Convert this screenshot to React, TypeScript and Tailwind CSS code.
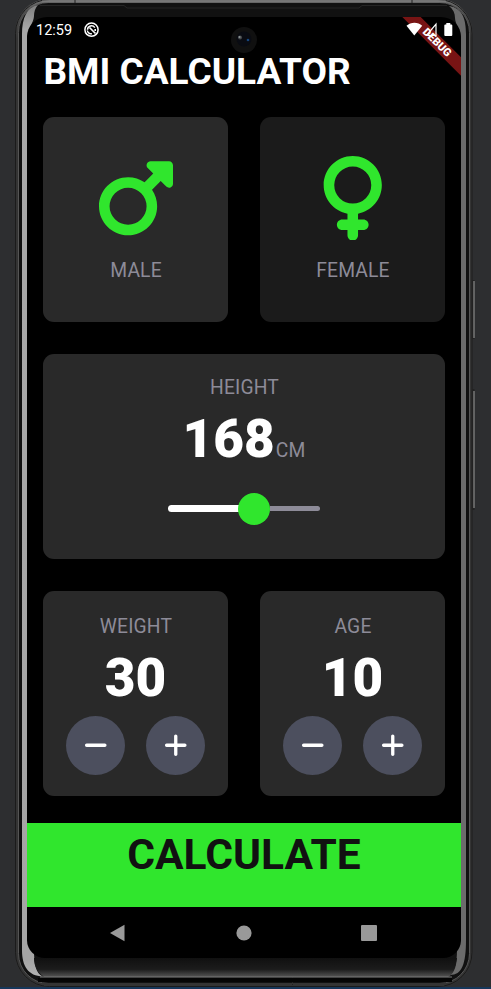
import type { ReactNode } from "react";
import { FaMars, FaMinus, FaPlus, FaVenus } from "react-icons/fa6";

function PhoneShell() {
  return (
    <svg className="absolute inset-0" width="491" height="989" viewBox="0 0 491 989" fill="none">
      <defs>
        <linearGradient id="rim" x1="0" y1="0" x2="0" y2="1">
          <stop offset="0" stopColor="#777" />
          <stop offset="0.012" stopColor="#505050" />
          <stop offset="0.04" stopColor="#343434" />
          <stop offset="1" stopColor="#343434" />
        </linearGradient>
        <linearGradient id="chin" x1="0" y1="958" x2="0" y2="977" gradientUnits="userSpaceOnUse">
          <stop offset="0" stopColor="#101010" />
          <stop offset="0.6" stopColor="#1c1c1c" />
          <stop offset="1" stopColor="#555" />
        </linearGradient>
        <linearGradient id="glassL" x1="0" y1="0" x2="0" y2="989" gradientUnits="userSpaceOnUse">
          <stop offset="0" stopColor="#777" />
          <stop offset="0.03" stopColor="#a9a9a9" />
          <stop offset="0.97" stopColor="#a5a5a5" />
          <stop offset="1" stopColor="#bbb" />
        </linearGradient>
      </defs>
      <path d="M472 280h2.500v59H472zM472 389h2.500v121H472z" fill="#222" />
      <path d="M474 281v57M474 391v117" stroke="#a0a0a0" />
      <rect x="15" y="-1" width="457.500" height="988" rx="34" fill="url(#rim)" />
      <rect x="15.500" y="-0.500" width="456.500" height="987" rx="34" stroke="#1b1b1b" />
      <rect x="18.500" y="2.500" width="451" height="981" rx="30" fill="#111" stroke="#555" />
      <path d="M42 1.500h404" stroke="#777" strokeWidth="2" />
      <path d="M75 0v3M412 0v3M292.500 977v9" stroke="#222" />
      <rect x="21.500" y="4.500" width="445" height="973" rx="26" fill="#111" />
      <path d="M38 5C27 7 22 18 22 34V950C22 966 28 976 43 976.500C36 974 34 964 34 950L27 940V40C27 30 34 22 34 16C34 12 35 8 38 5Z" fill="url(#glassL)" />
      <path d="M449 6C462 8 466 18 466 34V940C466 964 462 975 450 975C455 970 457 962 457 950L461 940V40C461 30 455 24 455 18C455 13 453 9 449 6Z" fill="#6b6b6b" />
      <path d="M34 958H457C456 968 453 975 448 977H44C37 972 34 966 34 958Z" fill="url(#chin)" />
      <path d="M40 977h412" stroke="#777" strokeWidth="1" />
      <path d="M38 980h414" stroke="#050505" strokeWidth="4" />
      <path d="M40 983.500h408M44 985.500h400" stroke="#343434" />
      <path d="M40 5.500h84l3 2.500h232l3-2.500h85" stroke="#252525" />
      <path d="M0 988h491" stroke="#17375a" strokeWidth="2" />
    </svg>
  );
}

function StatusBar() {
  return (
    <header className="relative z-10 flex h-[35px] shrink-0 items-start pl-[9px] pr-[7px] pt-[5px] text-white">
      <span className="text-[14.500px] leading-[17px]">12:59</span>
      <svg className="ml-[12px]" width="15" height="16" viewBox="0 0 15 16" fill="none">
        <circle cx="7.500" cy="7.700" r="6.600" stroke="white" strokeWidth="1.500" />
        <path d="M3.500 7.700a4 4 0 0 1 7.300-2.100M3.300 8.500a4 4 0 0 0 4.600 3.300" stroke="white" strokeWidth="1.500" />
        <path d="M5.500 5.500l6 6M11.200 7v2" stroke="white" strokeWidth="1.600" />
      </svg>
      <svg className="ml-auto" width="48" height="16" viewBox="0 0 48 16">
        <path d="M0.500 3.800C5-.2 12-.2 16.200 3.800L8.300 13.600Z" fill="white" />
        <path d="M30 2.200v11.300H20.500Z" fill="none" stroke="white" strokeWidth="1.200" />
        <path d="M40.300 1h4v1.400h1q1 0 1 1V13q0 1-1 1h-6q-1 0-1-1V3.400q0-1 1-1h1Z" fill="white" />
      </svg>
    </header>
  );
}

function DebugBanner() {
  return (
    <div className="absolute right-0 top-0 h-[60px] w-[60px] overflow-hidden">
      <div className="absolute left-[-14.500px] top-[18.500px] flex h-[13px] w-[100px] rotate-45 items-center justify-center bg-[#781414] text-[11px] font-black leading-none text-white">
        DEBUG
      </div>
    </div>
  );
}

function Label({ children }: { children: ReactNode }) {
  return <span className="pl-px text-[19.300px] leading-6 tracking-[0.150px] text-[#8d8b98]">{children}</span>;
}

function Gender({ label, icon, shade }: { label: string; icon: ReactNode; shade: string }) {
  return (
    <button className={`flex w-[185px] flex-col items-center gap-[19px] rounded-[11px] pt-[38.700px] text-[#30e62d] ${shade}`}>
      {icon}
      <Label>{label}</Label>
    </button>
  );
}

function Counter({ label, value }: { label: string; value: number }) {
  const round = "flex h-[59px] w-[59px] items-center justify-center rounded-full bg-[#4c4f5e] text-white";
  return (
    <section className="flex w-[185px] flex-col items-center rounded-[11px] bg-[#292929] pt-[24px]">
      <Label>{label}</Label>
      <span className="mt-[11px] text-[53px] font-black leading-[56px] text-white">{value}</span>
      <div className="mt-[10px] flex gap-[21px]">
        <button className={round}><FaMinus className="h-[26.500px] w-[23.500px]" /></button>
        <button className={round}><FaPlus className="h-[26.500px] w-[23.500px]" /></button>
      </div>
    </section>
  );
}

export default function App() {
  return (
    <div className="relative h-[989px] w-[491px] overflow-hidden bg-[#2d2e30] pl-[27px] pt-[17px] font-[Roboto,sans-serif]">
      <PhoneShell />
      <div className="relative flex h-[941px] w-[434px] flex-col overflow-hidden rounded-b-[18px] rounded-t-[20px] bg-black">
        <StatusBar />
        <svg className="absolute left-[203px] top-[9px]" width="28" height="28" viewBox="0 0 28 28">
          <circle cx="14" cy="14" r="13" fill="#101010" />
          <circle cx="14" cy="13" r="7.500" fill="#090b12" />
          <circle cx="10" cy="11.500" r="2" fill="#46494c" />
          <circle cx="9.500" cy="11" r="1" fill="#8c9696" />
          <circle cx="18" cy="14" r="1.300" fill="#17457c" />
        </svg>
        <h1 className="pl-[16.500px] text-[37px] font-bold leading-10 text-white">BMI CALCULATOR</h1>
        <main className="mt-[25px] flex flex-col gap-8 px-4">
          <div className="flex h-[205px] justify-between">
            <Gender label="MALE" shade="bg-[#292929]" icon={<FaMars className="h-[84.600px] w-[74px]" />} />
            <Gender label="FEMALE" shade="bg-[#1b1b1b]" icon={<FaVenus className="h-[84.600px] w-[63.500px]" />} />
          </div>
          <section className="flex h-[205px] flex-col items-center rounded-[11px] bg-[#292929] pt-[22px]">
            <Label>HEIGHT</Label>
            <div className="mt-[11px] flex items-baseline leading-[56px]">
              <span className="text-[53px] font-black leading-[56px] text-white">168</span>
              <Label>CM</Label>
            </div>
            <div className="mt-[25.500px] flex h-8 w-[152px] items-center">
              <div className="h-[6.500px] w-[72px] rounded-l-full bg-white" />
              <div className="-ml-0.5 h-8 w-8 shrink-0 rounded-full bg-[#30e62d]" />
              <div className="h-[5px] flex-1 rounded-r-full bg-[#8d8b98]" />
            </div>
          </section>
          <div className="flex h-[205px] justify-between">
            <Counter label="WEIGHT" value={30} />
            <Counter label="AGE" value={10} />
          </div>
        </main>
        <button className="mt-[27px] flex h-[84px] shrink-0 items-start justify-center bg-[#30e62d] pt-[8px] text-[42.500px] font-bold leading-[48px] text-[#111]">
          CALCULATE
        </button>
        <nav className="flex h-[51px] items-center justify-between pl-[82px] pr-[84px] text-[#999]">
          <svg width="16" height="18" viewBox="0 0 16 18" fill="currentColor"><path d="M1 9L15.500 0.700V17.300Z" /></svg>
          <svg className="ml-0.5" width="16" height="16" viewBox="0 0 16 16" fill="currentColor"><circle cx="8" cy="8" r="7.600" /></svg>
          <svg width="16" height="16" viewBox="0 0 16 16" fill="currentColor"><rect width="16" height="16" rx="1" /></svg>
        </nav>
        <DebugBanner />
      </div>
    </div>
  );
}
